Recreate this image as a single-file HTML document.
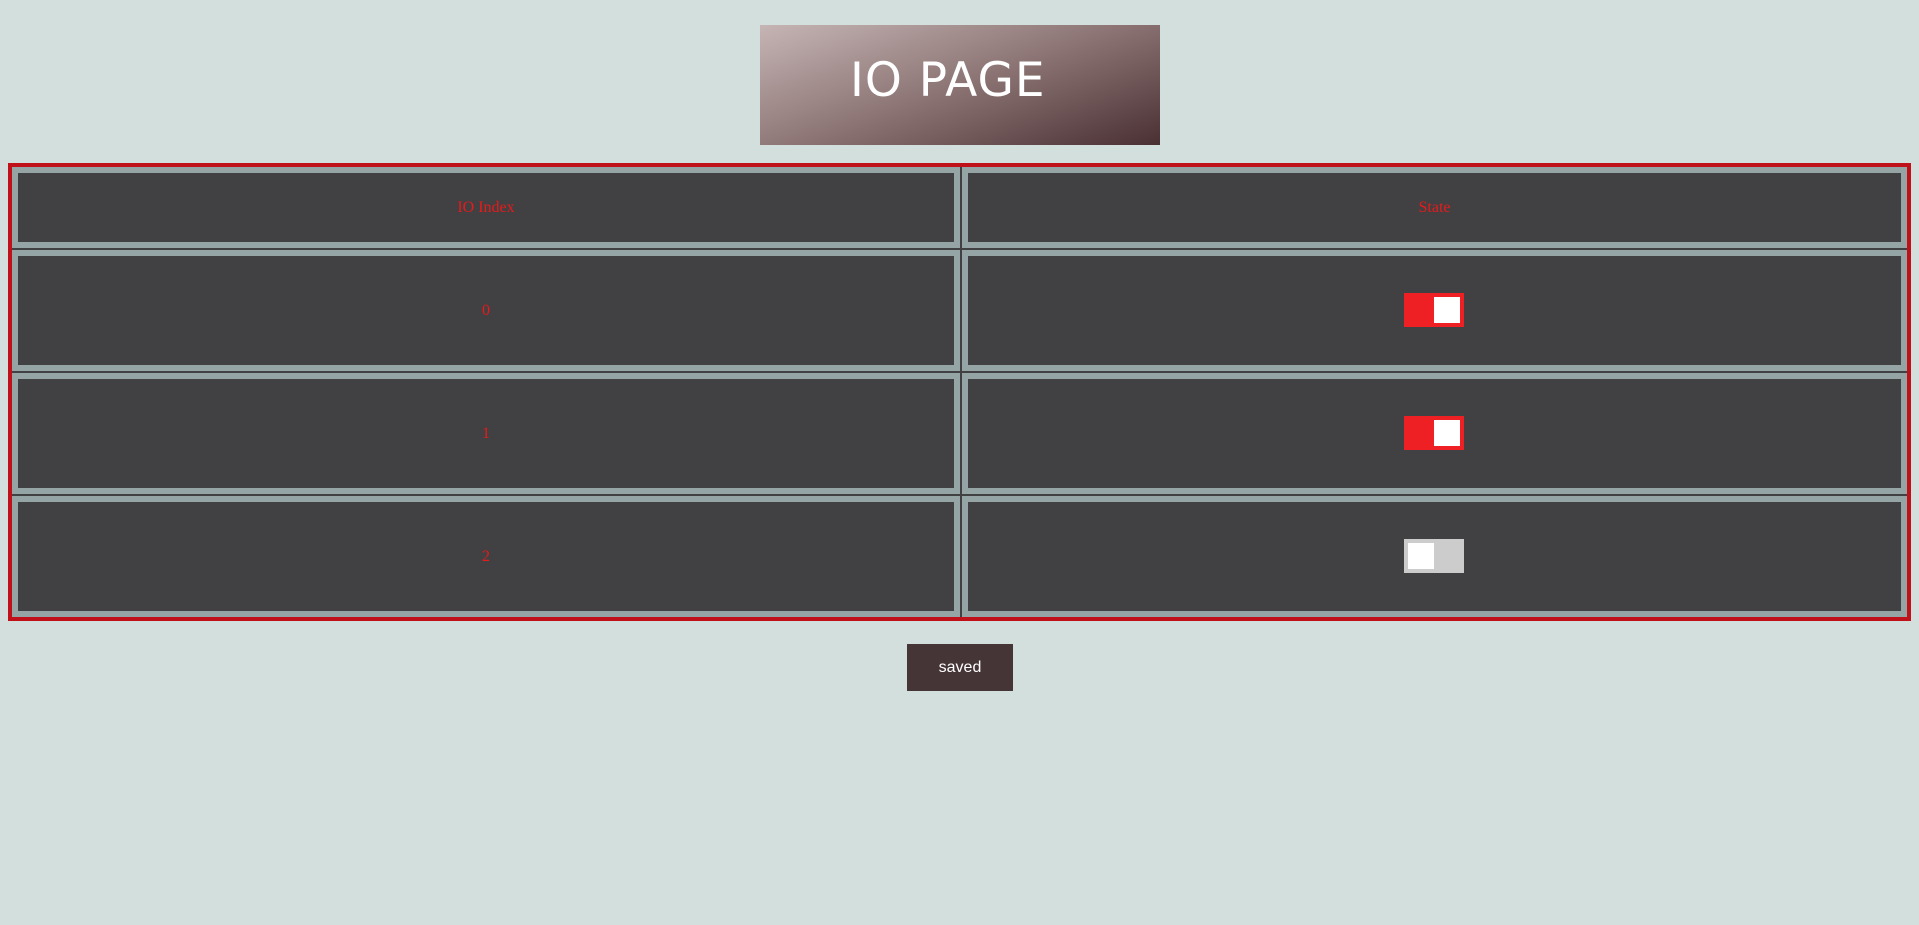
<!DOCTYPE html>
<html><head><meta charset="utf-8"><style>
html,body{margin:0;padding:0;background:#d2dfdd;width:1919px;height:925px;overflow:hidden;font-family:"Liberation Serif",serif}
.banner{position:absolute;left:760px;top:25px;width:400px;height:120px;background:linear-gradient(160deg,#c6b5b5 0%,#8c7474 50%,#4a3033 100%)}
.banner span{position:absolute;left:90px;top:28px;font-family:"DejaVu Sans","Liberation Sans",sans-serif;font-size:47px;color:#fff;letter-spacing:1px}
.tbl{position:absolute;left:8px;top:163px;width:1895px;height:450px;border:4px solid #c0101a;background:#414042}
.cell{position:absolute;box-sizing:border-box;border:6px solid #95a5a5;background:#414042;color:#e81a1a;font-size:16px;display:flex;align-items:center;justify-content:center}
.tg{width:60px;height:34px;position:relative;box-sizing:border-box;margin-left:-2px;margin-top:-2px}
.on{background:#ee2024}
.on::after{content:"";position:absolute;right:4px;top:4px;width:26px;height:26px;background:#fff}
.off{background:#cccccc}
.off::after{content:"";position:absolute;left:4px;top:4px;width:26px;height:26px;background:#fff}
.btn{position:absolute;left:907px;top:644px;width:106px;height:47px;background:#463536;color:#fff;font-family:"Liberation Sans",sans-serif;font-size:16px;display:flex;align-items:center;justify-content:center}
</style></head><body>
<div class="banner"><span>IO PAGE</span></div>
<div class="tbl">
<div class="cell" style="left:0;top:0;width:948px;height:81px">IO Index</div>
<div class="cell" style="left:950px;top:0;width:945px;height:81px">State</div>
<div class="cell" style="left:0;top:83px;width:948px;height:121px">0</div>
<div class="cell" style="left:950px;top:83px;width:945px;height:121px"><div class="tg on"></div></div>
<div class="cell" style="left:0;top:206px;width:948px;height:121px">1</div>
<div class="cell" style="left:950px;top:206px;width:945px;height:121px"><div class="tg on"></div></div>
<div class="cell" style="left:0;top:329px;width:948px;height:121px">2</div>
<div class="cell" style="left:950px;top:329px;width:945px;height:121px"><div class="tg off"></div></div>
</div>
<div class="btn">saved</div>
</body></html>
